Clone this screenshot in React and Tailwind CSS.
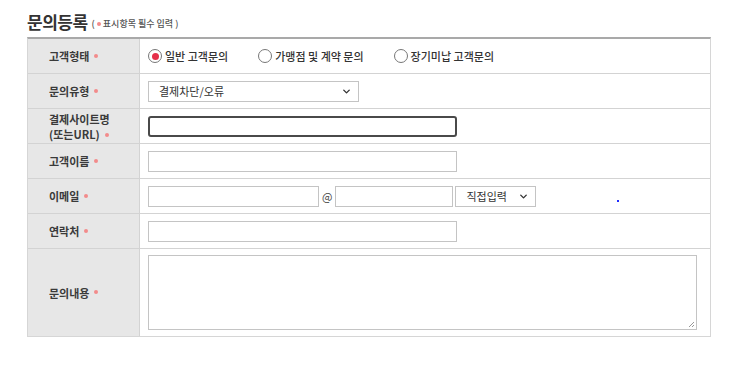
import { ChevronDown } from 'lucide-react'

const KR = { fontFamily: '"Noto Sans CJK KR", "Noto Sans", sans-serif' }

function Req() {
  return <span className="mb-[1px] ml-[5px] inline-block h-[4px] w-[4px] rounded-full bg-[#f28b8b] align-middle" />
}

function Row({ label, h = 'h-[35px]', last, children }) {
  return (
    <div className={`flex ${h} ${last ? '' : 'border-b border-[#d3d3d3]'}`}>
      <div className="flex w-[112px] flex-none items-center border-r border-[#d3d3d3] bg-[#e7e7e7] pl-[21px] text-[11px] font-semibold leading-[14px] text-[#3a3a3a]">
        {label}
      </div>
      <div className="flex flex-1 items-center pl-[8px]">{children}</div>
    </div>
  )
}

function Radio({ checked, label }) {
  return (
    <label className="flex items-center gap-[3px] text-[11px] font-medium text-[#333]">
      <span className="flex h-[14px] w-[14px] items-center justify-center rounded-full border border-[#777] bg-white">
        {checked && <span className="h-[7px] w-[7px] rounded-full bg-[#e5304a]" />}
      </span>
      {label}
    </label>
  )
}

function Box({ w }) {
  return <div className={`${w} h-[21px] border border-[#c4c4c4] bg-white`} />
}

function Select({ w, text }) {
  return (
    <div className={`flex h-[21px] ${w} items-center justify-between border border-[#c4c4c4] bg-white pl-[10px] pr-[6px] text-[11px] text-[#333]`}>
      <span>{text}</span>
      <ChevronDown size={11} strokeWidth={3} className="text-[#333]" />
    </div>
  )
}

export default function App() {
  return (
    <div className="h-[370px] w-[743px] bg-white pl-[27px] pt-[7px]" style={KR}>
      <div className="flex h-[30px] items-center gap-[4px]">
        <h1 className="text-[17px] font-bold tracking-[-0.5px] text-[#333]">문의등록</h1>
        <span className="mt-[3px] text-[9px] font-medium text-[#555]">
          ( <span className="mb-[1px] inline-block h-[4px] w-[4px] rounded-full bg-[#f28b8b] align-middle" /> 표시항목 필수 입력 )
        </span>
      </div>

      <div className="w-[684px] border-x border-b border-t-2 border-x-[#d6d6d6] border-b-[#d6d6d6] border-t-[#a9a9a9]">
        <Row label={<>고객형태<Req /></>}>
          <div className="flex gap-[30px]">
            <Radio checked label="일반 고객문의" />
            <Radio label="가맹점 및 계약 문의" />
            <Radio label="장기미납 고객문의" />
          </div>
        </Row>
        <Row label={<>문의유형<Req /></>}>
          <Select w="w-[211px]" text="결제차단/오류" />
        </Row>
        <Row label={<div className="flex flex-col gap-[1px]"><span className="h-[14px] leading-[14px]">결제사이트명</span><span className="h-[14px] leading-[14px]">(또는URL)<Req /></span></div>}>
          <div className="h-[21px] w-[309px] rounded-[3px] border-2 border-[#4a4a4a] bg-white" />
        </Row>
        <Row label={<>고객이름<Req /></>}>
          <Box w="w-[309px]" />
        </Row>
        <Row label={<>이메일<Req /></>}>
          <Box w="w-[171px]" />
          <span className="mx-[3px] text-[11px] text-[#444]">@</span>
          <Box w="w-[118px]" />
          <div className="ml-[2px]">
            <Select w="w-[81px]" text="직접입력" />
          </div>
          <span className="ml-[81px] mt-[10px] h-[2px] w-[2px] bg-[#1f2cff]" />
        </Row>
        <Row label={<>연락처<Req /></>}>
          <Box w="w-[309px]" />
        </Row>
        <Row label={<>문의내용<Req /></>} h="h-[87px]" last>
          <div className="relative h-[75px] w-[549px] border border-[#c4c4c4] bg-white">
            <svg className="absolute bottom-[1px] right-[1px]" width="7" height="7" viewBox="0 0 7 7">
              <path d="M6 1L1 6M6 4L4 6" stroke="#999" strokeWidth="1" />
            </svg>
          </div>
        </Row>
      </div>
    </div>
  )
}
